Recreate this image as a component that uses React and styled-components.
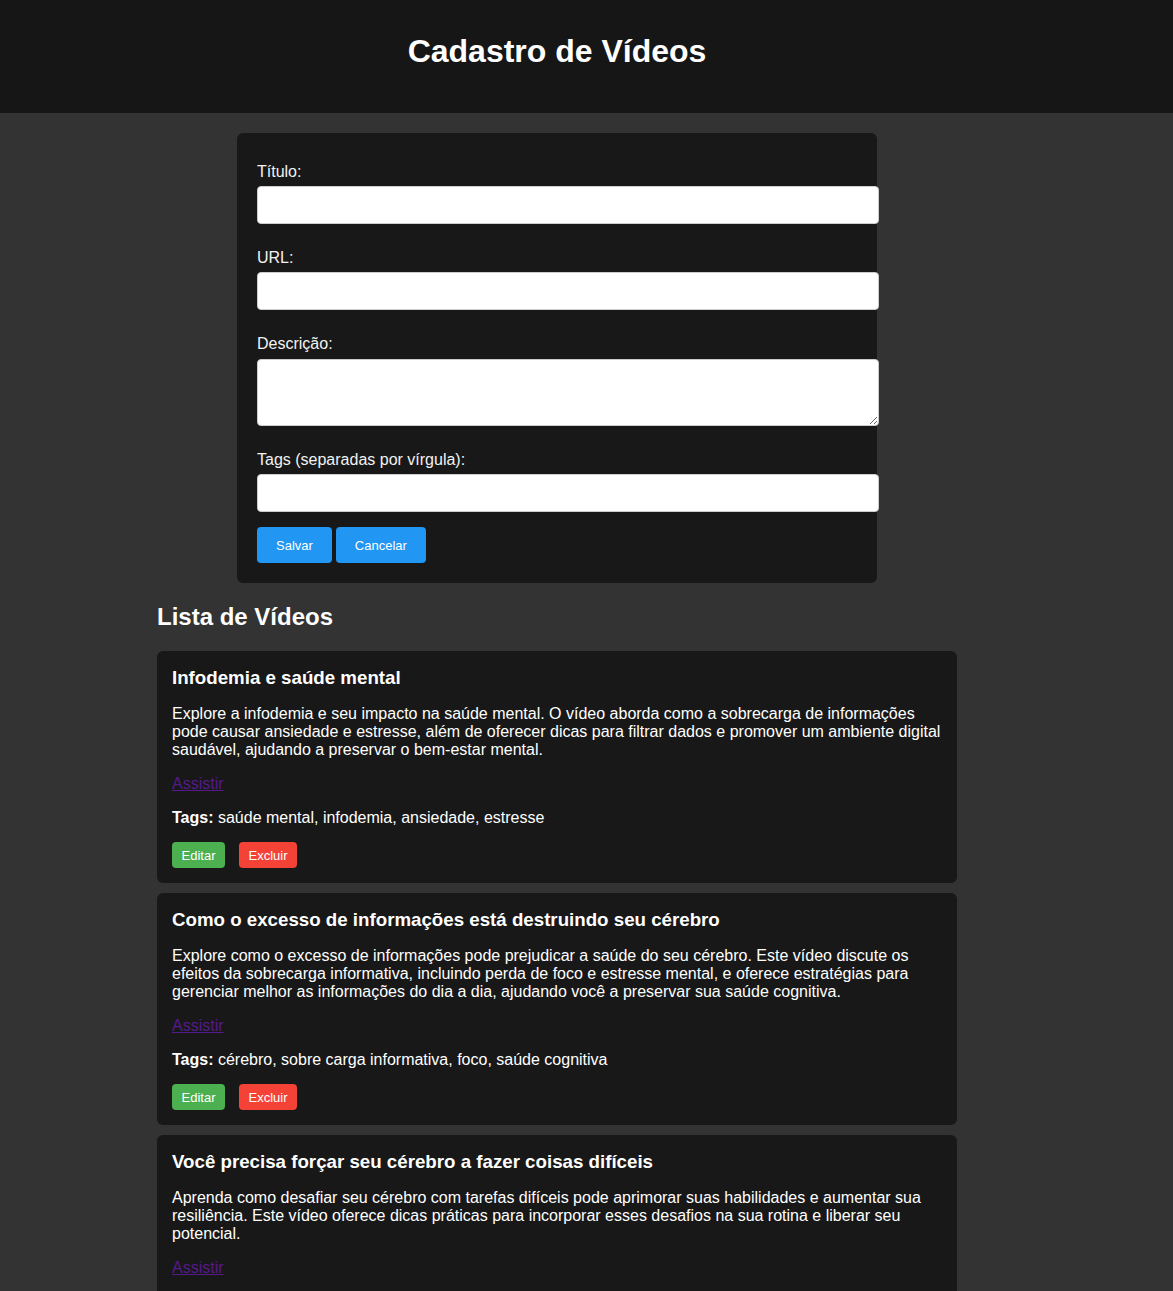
import React from "react";
import styled, { createGlobalStyle } from "styled-components";

const GlobalStyle = createGlobalStyle`
  body {
    margin: 0;
    background: #333333;
    color: #ffffff;
    font-family: "Liberation Sans", Arial, sans-serif;
  }
`;

const videos = [
  {
    id: 1,
    title: "Infodemia e saúde mental",
    description:
      "Explore a infodemia e seu impacto na saúde mental. O vídeo aborda como a sobrecarga de informações pode causar ansiedade e estresse, além de oferecer dicas para filtrar dados e promover um ambiente digital saudável, ajudando a preservar o bem-estar mental.",
    tags: "saúde mental, infodemia, ansiedade, estresse",
  },
  {
    id: 2,
    title: "Como o excesso de informações está destruindo seu cérebro",
    description:
      "Explore como o excesso de informações pode prejudicar a saúde do seu cérebro. Este vídeo discute os efeitos da sobrecarga informativa, incluindo perda de foco e estresse mental, e oferece estratégias para gerenciar melhor as informações do dia a dia, ajudando você a preservar sua saúde cognitiva.",
    tags: "cérebro, sobre carga informativa, foco, saúde cognitiva",
  },
  {
    id: 3,
    title: "Você precisa forçar seu cérebro a fazer coisas difíceis",
    description:
      "Aprenda como desafiar seu cérebro com tarefas difíceis pode aprimorar suas habilidades e aumentar sua resiliência. Este vídeo oferece dicas práticas para incorporar esses desafios na sua rotina e liberar seu potencial.",
    tags: "cérebro, desafios, resiliência, potencial",
  },
];

function App() {
  return (
    <>
      <GlobalStyle />
      <Header>
        <h1>Cadastro de Vídeos</h1>
      </Header>
      <Main>
        <FormContainer>
          <form onSubmit={(e) => e.preventDefault()}>
            <FormGroup>
              <Label htmlFor="titulo">Título:</Label>
              <Input id="titulo" type="text" />
            </FormGroup>
            <FormGroup>
              <Label htmlFor="url">URL:</Label>
              <Input id="url" type="text" />
            </FormGroup>
            <FormGroup>
              <Label htmlFor="descricao">Descrição:</Label>
              <TextArea id="descricao" />
            </FormGroup>
            <FormGroup>
              <Label htmlFor="tags">Tags (separadas por vírgula):</Label>
              <Input id="tags" type="text" />
            </FormGroup>
            <FormButtons>
              <BlueButton type="submit">Salvar</BlueButton>
              <BlueButton type="button">Cancelar</BlueButton>
            </FormButtons>
          </form>
        </FormContainer>

        <ListTitle>Lista de Vídeos</ListTitle>
        {videos.map((video) => (
          <Card key={video.id}>
            <CardTitle>{video.title}</CardTitle>
            <Description>{video.description}</Description>
            <LinkLine>
              <a href="#">Assistir</a>
            </LinkLine>
            <Tags>
              <strong>Tags:</strong> {video.tags}
            </Tags>
            <Actions>
              <SmallButton color="#4caf50">Editar</SmallButton>
              <SmallButton color="#f44336">Excluir</SmallButton>
            </Actions>
          </Card>
        ))}
      </Main>
    </>
  );
}

export default App;

const Header = styled.header`
  background: #161616;
  padding: 33px 59px 43px 0;
  text-align: center;
  h1 {
    margin: 0;
    font-size: 32px;
    line-height: 37px;
    font-weight: bold;
    color: #ffffff;
  }
`;

const Main = styled.main`
  width: 800px;
  margin: 0 auto;
  position: relative;
  left: -29.5px;
`;

const FormContainer = styled.div`
  width: 600px;
  margin: 20px auto 0;
  padding: 20px;
  background: #181818;
  border-radius: 6px;
`;

const FormGroup = styled.div`
  padding-top: 10px;
  margin-bottom: 15px;
`;

const Label = styled.label`
  display: block;
  margin: 0 0 5px;
  font-size: 16px;
  line-height: 18px;
  color: #f2f2f2;
`;

const Input = styled.input`
  display: block;
  width: 100%;
  height: 18px;
  padding: 9px 10px;
  border: 1px solid #cccccc;
  border-radius: 4px;
  font-size: 16px;
  font-family: "Liberation Sans", Arial, sans-serif;
  background: #ffffff;
  outline: none;
`;

const TextArea = styled.textarea`
  display: block;
  width: 100%;
  height: 45px;
  margin-top: 6px;
  padding: 10px;
  border: 1px solid #cccccc;
  border-radius: 4px;
  font-size: 16px;
  font-family: "Liberation Sans", Arial, sans-serif;
  background: #ffffff;
  outline: none;
`;

const FormButtons = styled.div`
  display: flex;
  gap: 4px;
`;

const BlueButton = styled.button`
  background: #2196f3;
  color: #ffffff;
  border: none;
  border-radius: 4px;
  padding: 10px 19px;
  height: 36px;
  font-size: 13px;
  font-family: "Liberation Sans", Arial, sans-serif;
  cursor: pointer;
`;

const ListTitle = styled.h2`
  font-size: 24px;
  line-height: 28px;
  font-weight: bold;
  margin: 20px 0;
  color: #ffffff;
`;

const Card = styled.div`
  background: #181818;
  border-radius: 6px;
  padding: 15px;
  margin-bottom: 10px;
`;

const CardTitle = styled.h3`
  font-size: 18.72px;
  font-weight: bold;
  margin: 0 0 16px;
  line-height: 23px;
`;

const Description = styled.p`
  font-size: 16px;
  line-height: 18px;
  margin: 0 0 16px;
`;

const LinkLine = styled.p`
  font-size: 16px;
  line-height: 18px;
  margin: 0 0 16px;
  a {
    color: #551a8b;
  }
`;

const Tags = styled.p`
  font-size: 16px;
  line-height: 18px;
  margin: 0 0 15px;
`;

const Actions = styled.div`
  display: flex;
  gap: 14px;
`;

const SmallButton = styled.button`
  background: ${(p) => p.color};
  color: #ffffff;
  border: none;
  border-radius: 4px;
  padding: 5px 9.5px;
  height: 26px;
  font-size: 13px;
  font-family: "Liberation Sans", Arial, sans-serif;
  cursor: pointer;
`;
